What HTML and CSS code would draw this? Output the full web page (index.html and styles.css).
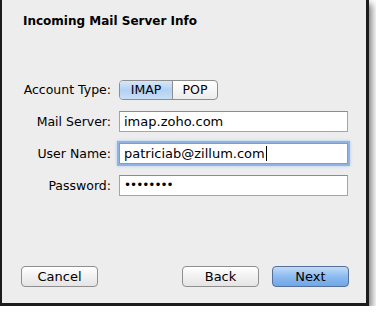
FILE: index.html
```html
<!DOCTYPE html>
<html lang="en">
<head>
    <meta charset="UTF-8">
    <meta name="viewport" content="width=device-width, initial-scale=1.0">
    <title>Incoming Mail Server Info</title>
    <link rel="stylesheet" href="styles.css">
</head>
<body>
    <div class="window">
        <h2 class="title">Incoming Mail Server Info</h2>

        <div class="form">
            <label>Account Type:</label>
            <div class="segmented">
                <span class="seg selected">IMAP</span>
                <span class="seg">POP</span>
            </div>

            <label>Mail Server:</label>
            <div class="field">imap.zoho.com</div>

            <label>User Name:</label>
            <div class="field focused"><span class="caret">patriciab@zillum.com</span></div>

            <label>Password:</label>
            <div class="field password">&bull;&bull;&bull;&bull;&bull;&bull;&bull;&bull;</div>
        </div>

        <div class="buttons">
            <button class="btn">Cancel</button>
            <div class="right">
                <button class="btn">Back</button>
                <button class="btn primary">Next</button>
            </div>
        </div>
    </div>
</body>
</html>
```

FILE: styles.css
```css
body {
    margin: 0;
    background: #fff;
    font-family: 'DejaVu Sans', Arial, sans-serif;
    font-size: 12.5px;
    color: #000;
}
.window {
    width: 364px;
    height: 303px;
    background: #ededed;
    border-left: 2px solid #1c1c1c;
    border-right: 3px solid #1c1c1c;
    border-bottom: 3px solid #1c1c1c;
    box-shadow: 3px 4px 7px rgba(0, 0, 0, 0.5);
    display: flex;
    flex-direction: column;
    box-sizing: content-box;
}
.title {
    margin: 0;
    padding: 13px 0 0 21px;
    font-size: 12px;
    font-weight: bold;
    line-height: 16px;
}
.form {
    margin-top: 50px;
    display: grid;
    grid-template-columns: 109px 229px;
    column-gap: 8px;
    row-gap: 11px;
    align-items: center;
}
.form label {
    text-align: right;
    line-height: 21px;
}
.segmented {
    display: flex;
    width: 99px;
    height: 20px;
    border: 1px solid #8e8e8e;
    border-radius: 4px;
    overflow: hidden;
    box-sizing: border-box;
    background: linear-gradient(#ffffff, #ececec);
}
.seg {
    flex: 1;
    text-align: center;
    line-height: 18px;
}
.seg.selected {
    flex: 0 0 52px;
    border-right: 1px solid #8e8e8e;
    background: linear-gradient(#d7e7f8, #b2d1f2 50%, #c8def7);
}
.field {
    height: 21px;
    box-sizing: border-box;
    border: 1px solid #a5a5a5;
    border-top-color: #8c8c8c;
    background: #fff;
    padding: 0 4px;
    line-height: 19px;
    font-size: 13px;
}
.field.focused {
    border-color: #7a9fcd;
    box-shadow: 0 0 0 2px #8fb4e3, 0 0 3px 2px #a9c7ee;
}
.caret {
    border-right: 1px solid #000;
    padding-right: 1px;
}
.password {
    font-size: 12px;
    letter-spacing: -1px;
}
.buttons {
    margin-top: auto;
    margin-bottom: 16px;
    padding: 0 17px 0 19px;
    display: flex;
    justify-content: space-between;
}
.right {
    display: flex;
    gap: 13px;
}
.btn {
    width: 77px;
    height: 21px;
    font-family: inherit;
    font-size: 13px;
    color: #000;
    border: 1px solid #8f8f8f;
    border-radius: 4px;
    background: linear-gradient(#ffffff, #f1f1f1 50%, #e4e4e4);
    padding: 0;
}
.btn.primary {
    border-color: #54709a;
    background: linear-gradient(#c4dbf6, #8cbbef 50%, #6fa7e8);
}
```
